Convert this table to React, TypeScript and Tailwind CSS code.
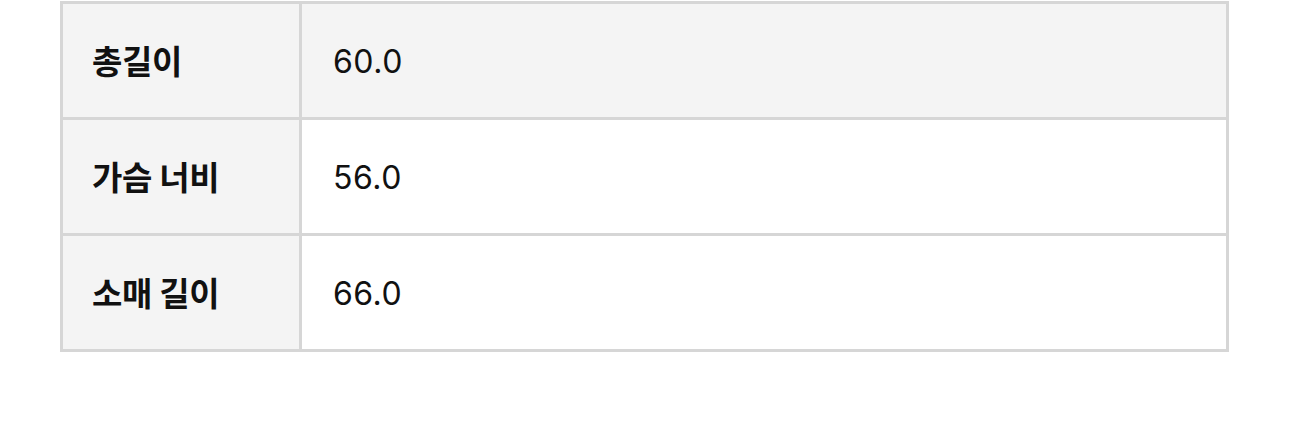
const rows = [
  { label: "총길이", value: "60.0", shaded: true },
  { label: "가슴 너비", value: "56.0", shaded: false },
  { label: "소매 길이", value: "66.0", shaded: false },
];

export default function App() {
  return (
    <div
      className="w-[1290px] h-[441px] bg-white pl-[60px] pt-[1px]"
      style={{ fontFamily: '"Noto Sans CJK KR", "Noto Sans", sans-serif' }}
    >
      <div className="w-[1169px] border-[3px] border-[#d6d6d6] text-[#111111]">
        {rows.map((row, i) => (
          <div
            key={row.label}
            className={`flex ${i < rows.length - 1 ? "border-b-[3px] border-[#d6d6d6]" : ""}`}
          >
            <div className="w-[239px] h-[113px] shrink-0 flex items-center pl-[29px] bg-[#f4f4f4] border-r-[3px] border-[#d6d6d6] text-[33px] font-bold tracking-[-0.3px]">
              {row.label}
            </div>
            <div
              className={`flex-1 h-[113px] flex items-center pl-[31px] pt-[2px] text-[32px] tracking-[0.5px] font-['Inter',sans-serif] ${
                row.shaded ? "bg-[#f4f4f4]" : "bg-white"
              }`}
            >
              {row.value}
            </div>
          </div>
        ))}
      </div>
    </div>
  );
}
